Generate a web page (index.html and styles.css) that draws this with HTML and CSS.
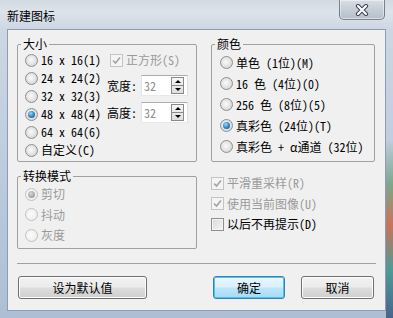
FILE: index.html
```html
<!DOCTYPE html>
<html lang="zh-CN">
<head>
    <meta charset="UTF-8">
    <meta name="viewport" content="width=device-width, initial-scale=1.0">
    <title>新建图标</title>
    <link rel="stylesheet" href="styles.css">
</head>
<body>
    <div class="window">
        <div class="titlebar">
            <span class="title">新建图标</span>
            <div class="close-btn">
                <svg width="14" height="12" viewBox="0 0 14 12">
                    <path d="M3 2 L11 10 M11 2 L3 10" stroke="#3b4350" stroke-width="4.2" stroke-linecap="round"/>
                    <path d="M3 2 L11 10 M11 2 L3 10" stroke="#ffffff" stroke-width="2.2" stroke-linecap="round"/>
                </svg>
            </div>
        </div>

        <div class="client">
            <div class="columns">
                <div class="col-left">
                    <fieldset class="group size-group">
                        <legend>大小</legend>
                        <div class="size-body">
                            <div class="radio-list">
                                <div class="opt"><span class="radio"></span>16 x 16(1)</div>
                                <div class="opt"><span class="radio"></span>24 x 24(2)</div>
                                <div class="opt"><span class="radio"></span>32 x 32(3)</div>
                                <div class="opt"><span class="radio selected"></span>48 x 48(4)</div>
                                <div class="opt"><span class="radio"></span>64 x 64(6)</div>
                                <div class="opt"><span class="radio"></span>自定义(C)</div>
                            </div>
                            <div class="size-custom">
                                <div class="opt square disabled">
                                    <span class="check checked">
                                        <svg width="9" height="9" viewBox="0 0 9 9"><path d="M1 4.5 L3.5 7 L8 1.5" fill="none" stroke="#a3a3a3" stroke-width="1.6"/></svg>
                                    </span>正方形(S)
                                </div>
                                <div class="spin-row">
                                    <span class="spin-label">宽度:</span>
                                    <div class="spin">
                                        <span class="spin-value">32</span>
                                        <span class="spin-btn"><span><i class="arrow-up"></i></span><span><i class="arrow-down"></i></span></span>
                                    </div>
                                </div>
                                <div class="spin-row">
                                    <span class="spin-label">高度:</span>
                                    <div class="spin">
                                        <span class="spin-value">32</span>
                                        <span class="spin-btn"><span><i class="arrow-up"></i></span><span><i class="arrow-down"></i></span></span>
                                    </div>
                                </div>
                            </div>
                        </div>
                    </fieldset>

                    <fieldset class="group mode-group">
                        <legend>转换模式</legend>
                        <div class="mode-body">
                            <div class="opt disabled"><span class="radio selected"></span>剪切</div>
                            <div class="opt disabled"><span class="radio"></span>抖动</div>
                            <div class="opt disabled"><span class="radio"></span>灰度</div>
                        </div>
                    </fieldset>
                </div>

                <div class="col-right">
                    <fieldset class="group color-group">
                        <legend>颜色</legend>
                        <div class="color-body">
                            <div class="opt"><span class="radio"></span>单色 (1位)(M)</div>
                            <div class="opt"><span class="radio"></span>16 色 (4位)(0)</div>
                            <div class="opt"><span class="radio"></span>256 色 (8位)(5)</div>
                            <div class="opt"><span class="radio selected"></span>真彩色 (24位)(T)</div>
                            <div class="opt"><span class="radio"></span>真彩色 + α通道 (32位)</div>
                        </div>
                    </fieldset>

                    <div class="check-list">
                        <div class="opt disabled">
                            <span class="check checked">
                                <svg width="9" height="9" viewBox="0 0 9 9"><path d="M1 4.5 L3.5 7 L8 1.5" fill="none" stroke="#a3a3a3" stroke-width="1.6"/></svg>
                            </span>平滑重采样(R)
                        </div>
                        <div class="opt disabled">
                            <span class="check checked">
                                <svg width="9" height="9" viewBox="0 0 9 9"><path d="M1 4.5 L3.5 7 L8 1.5" fill="none" stroke="#a3a3a3" stroke-width="1.6"/></svg>
                            </span>使用当前图像(U)
                        </div>
                        <div class="opt"><span class="check"></span>以后不再提示(D)</div>
                    </div>
                </div>
            </div>

            <div class="separator"></div>

            <div class="buttons">
                <button class="btn btn-reset">设为默认值</button>
                <button class="btn btn-default btn-ok">确定</button>
                <button class="btn btn-cancel">取消</button>
            </div>
        </div>
    </div>
</body>
</html>
```

FILE: styles.css
```css
* {
    box-sizing: border-box;
}

html, body {
    margin: 0;
    padding: 0;
}

body {
    width: 393px;
    height: 318px;
    overflow: hidden;
    font-family: "Noto Sans Mono CJK SC", "Noto Sans CJK SC", sans-serif;
    font-size: 12px;
    line-height: 14px;
    color: #000;
}

/* window frame */
.window {
    width: 393px;
    height: 318px;
    display: flex;
    flex-direction: column;
    background:
        linear-gradient(180deg, rgba(0,0,0,0) 140px, #7fa58c 185px, #c9735c 225px, #4f9a96 270px, #4a6488 318px) right top / 7px 100% no-repeat,
        linear-gradient(180deg, #d4dae2 0px, #dde3ea 12px, #cdd7e3 29px, #b9c9dc 200px, #aebfd5 318px);
}

.titlebar {
    height: 29px;
    flex: none;
    display: flex;
    align-items: flex-start;
}

.title {
    margin: 9px 0 0 7px;
    color: #000;
}

.close-btn {
    margin-left: auto;
    margin-right: 8px;
    width: 46px;
    height: 20px;
    border: 1px solid rgba(50, 60, 75, 0.55);
    border-top: none;
    border-radius: 0 0 5px 5px;
    background: linear-gradient(180deg, #d9dee5, #c2cad4 60%, #b6c0cc);
    box-shadow: inset 0 0 0 1px rgba(255, 255, 255, 0.45);
    display: flex;
    align-items: center;
    justify-content: center;
}

.client {
    flex: 1;
    margin: 0 7px 7px;
    background: #f0f0f0;
    border: 1px solid #8f9db0;
    padding: 7px 9px 0 9px;
}

.columns {
    display: flex;
    gap: 14px;
    align-items: flex-start;
}

.col-left {
    width: 180px;
}

.col-right {
    width: 164px;
}

/* group boxes */
.group {
    margin: 0;
    padding: 0;
    min-width: 0;
    border: 1px solid #a0a0a0;
    border-radius: 2px;
}

.group legend {
    margin-left: 3px;
    padding: 0 2px;
    line-height: 14px;
}

.opt {
    display: flex;
    align-items: center;
    white-space: nowrap;
}

.opt.disabled {
    color: #9a9a9a;
}

.size-body {
    display: flex;
    padding: 0 0 2px 7px;
}

.radio-list {
    width: 82px;
}

.radio-list .opt {
    height: 18px;
}

.size-custom {
    flex: 1;
}

.square {
    height: 18px;
    padding-left: 3px;
}

.spin-row {
    display: flex;
    align-items: center;
    margin-top: 6px;
}

.spin-label {
    width: 34px;
}

.spin {
    width: 47px;
    height: 21px;
    background: #fff;
    border: 1px solid #abadb3;
    border-color: #abadb3 #dbdfe6 #e3e9ef #e2e3ea;
    display: flex;
    align-items: center;
    padding: 0 3px 0 2px;
}

.spin-value {
    flex: 1;
    color: #8c8c8c;
}

.spin-btn {
    width: 13px;
    height: 17px;
    display: flex;
    flex-direction: column;
    border: 1px solid #8a8a8a;
    background: linear-gradient(180deg, #f6f6f6, #dedede);
}

.spin-btn span {
    flex: 1;
    display: flex;
    align-items: center;
    justify-content: center;
}

.spin-btn span + span {
    border-top: 1px solid #8a8a8a;
}

.arrow-up,
.arrow-down {
    width: 0;
    height: 0;
    border-left: 3px solid transparent;
    border-right: 3px solid transparent;
}

.arrow-up {
    border-bottom: 3px solid #000;
}

.arrow-down {
    border-top: 3px solid #000;
}

.mode-group {
    margin-top: 7px;
}

.mode-body {
    padding: 1px 0 2.5px 7px;
}

.mode-body .opt {
    height: 20.5px;
}

.color-body {
    padding: 1px 0 4px 8px;
}

.color-body .opt {
    height: 21px;
}

.check-list {
    margin-top: 11px;
}

.check-list .opt {
    height: 20.5px;
}

/* radio buttons */
.radio {
    flex: none;
    width: 13px;
    height: 13px;
    margin-right: 3px;
    border-radius: 50%;
    border: 1px solid #8e8f8f;
    background: radial-gradient(circle at 45% 45%, #fafafa 0%, #e6e6e6 45%, #c9c9c9 100%);
    display: flex;
    align-items: center;
    justify-content: center;
}

.radio.selected::after {
    content: "";
    width: 7px;
    height: 7px;
    border-radius: 50%;
    background: radial-gradient(circle at 40% 35%, #9fdcfb 0%, #3c8fd0 45%, #16477e 100%);
}

.disabled .radio {
    border-color: #c2c2c2;
    background: radial-gradient(circle at 45% 45%, #fbfbfb 0%, #f1f1f1 60%, #e2e2e2 100%);
}

.disabled .radio.selected::after {
    background: radial-gradient(circle at 40% 35%, #d8d8d8 0%, #a7a7a7 60%, #8d8d8d 100%);
}

/* check boxes */
.check {
    flex: none;
    width: 13px;
    height: 13px;
    margin-right: 3px;
    border: 1px solid #8e8f8f;
    background: linear-gradient(135deg, #d8d8d8, #f6f6f6);
    box-shadow: inset 0 0 0 1px #f4f4f4;
    display: flex;
    align-items: center;
    justify-content: center;
}

.disabled .check {
    border-color: #c4c4c4;
    background: #f4f4f4;
    box-shadow: none;
}

.separator {
    margin-top: 14px;
    height: 1px;
    background: #a0a0a0;
}

/* buttons */
.buttons {
    display: flex;
    margin-top: 12px;
}

.btn {
    height: 23px;
    padding: 0;
    font: inherit;
    color: #000;
    border: 1px solid #707070;
    border-radius: 3px;
    background: linear-gradient(180deg, #f2f2f2 0%, #ebebeb 48%, #dddddd 52%, #cfcfcf 100%);
    box-shadow: inset 0 0 0 1px #fcfcfc;
}

.btn-reset {
    width: 129px;
    margin-left: 1px;
}

.btn-ok {
    width: 72px;
    margin-left: auto;
}

.btn-cancel {
    width: 73px;
    margin-left: 16px;
    margin-right: 2px;
}

.btn-default {
    border-color: #3c7fb1;
    background: linear-gradient(180deg, #eaf6fd 0%, #d9f0fc 48%, #bee6fd 52%, #a7d9f5 100%);
    box-shadow: inset 0 0 0 1px #48c5f2;
}
```
